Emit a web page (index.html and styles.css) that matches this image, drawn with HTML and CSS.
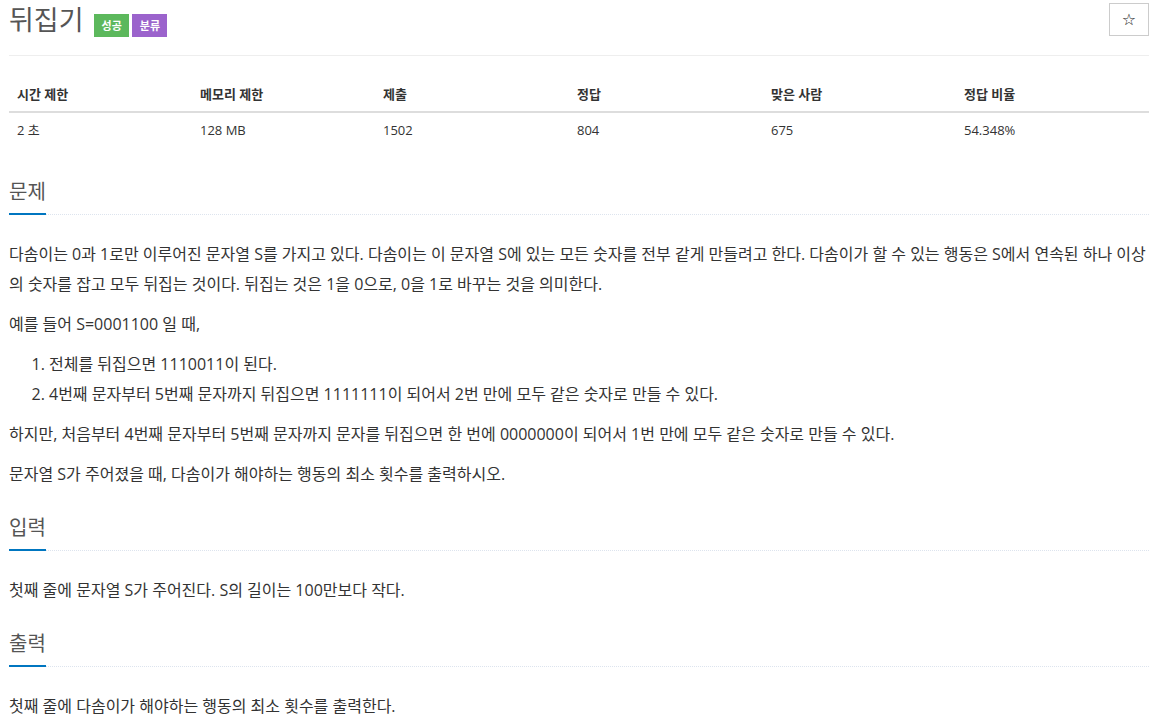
FILE: index.html
```html
<!DOCTYPE html>
<html lang="ko">
<head>
<meta charset="utf-8">
<link rel="stylesheet" href="styles.css">
</head>
<body>
<div class="page">
  <div class="page-header">
    <h1 class="title">뒤집기 <span class="label label-green">성공</span><span class="label label-purple">분류</span></h1>
    <button class="star">☆</button>
  </div>
  <table class="info">
    <colgroup>
      <col class="c1"><col class="c2"><col class="c3"><col class="c4"><col class="c5"><col class="c6">
    </colgroup>
    <thead>
      <tr><th>시간 제한</th><th>메모리 제한</th><th>제출</th><th>정답</th><th>맞은 사람</th><th>정답 비율</th></tr>
    </thead>
    <tbody>
      <tr><td>2 초</td><td>128 MB</td><td>1502</td><td>804</td><td>675</td><td>54.348%</td></tr>
    </tbody>
  </table>

  <section class="section">
    <div class="headline"><h2>문제</h2></div>
    <div class="text">
      <p>다솜이는 0과 1로만 이루어진 문자열 S를 가지고 있다. 다솜이는 이 문자열 S에 있는 모든 숫자를 전부 같게 만들려고 한다. 다솜이가 할 수 있는 행동은 S에서 연속된 하나 이상의 숫자를 잡고 모두 뒤집는 것이다. 뒤집는 것은 1을 0으로, 0을 1로 바꾸는 것을 의미한다.</p>
      <p>예를 들어 S=0001100 일 때,</p>
      <ol>
        <li>전체를 뒤집으면 1110011이 된다.</li>
        <li>4번째 문자부터 5번째 문자까지 뒤집으면 1111111이 되어서 2번 만에 모두 같은 숫자로 만들 수 있다.</li>
      </ol>
      <p>하지만, 처음부터 4번째 문자부터 5번째 문자까지 문자를 뒤집으면 한 번에 0000000이 되어서 1번 만에 모두 같은 숫자로 만들 수 있다.</p>
      <p>문자열 S가 주어졌을 때, 다솜이가 해야하는 행동의 최소 횟수를 출력하시오.</p>
    </div>
  </section>

  <section class="section">
    <div class="headline"><h2>입력</h2></div>
    <div class="text">
      <p>첫째 줄에 문자열 S가 주어진다. S의 길이는 100만보다 작다.</p>
    </div>
  </section>

  <section class="section">
    <div class="headline"><h2>출력</h2></div>
    <div class="text">
      <p>첫째 줄에 다솜이가 해야하는 행동의 최소 횟수를 출력한다.</p>
    </div>
  </section>
</div>
</body>
</html>
```
FILE: styles.css
```css
html, body {
  margin: 0;
  padding: 0;
  background: #fff;
}
body {
  font-family: "Open Sans", "Noto Sans CJK KR", sans-serif;
  color: #333;
  font-size: 13px;
}
.page {
  padding: 0 3px 0 9px;
}
.page-header {
  display: flex;
  justify-content: space-between;
  align-items: flex-start;
  border-bottom: 1px solid #eee;
  height: 56px;
  box-sizing: border-box;
}
.title {
  margin: 0;
  padding-top: 2px;
  font-size: 27px;
  font-weight: 400;
  line-height: 36px;
  color: #555;
  display: flex;
  align-items: center;
}
.label {
  display: inline-block;
  font-size: 11px;
  font-weight: 700;
  color: #fff;
  line-height: 23px;
  height: 23px;
  padding: 0 7px 0 8px;
  margin-top: 11px;
}
.label-green {
  background: #5cb85c;
  margin-left: 10px;
}
.label-purple {
  background: #9b63cc;
  margin-left: 3px;
}
.star {
  margin-top: 3px;
  width: 40px;
  height: 33px;
  border: 1px solid #ccc;
  background: #fff;
  font-size: 16px;
  color: #222;
  padding: 0;
  font-family: "DejaVu Sans", sans-serif;
}
.info {
  width: 1140px;
  border-collapse: collapse;
  margin-top: 21px;
  margin-bottom: 30px;
  table-layout: fixed;
}
.info .c1, .info .c2 { width: 183px; }
.info .c3, .info .c4 { width: 194px; }
.info .c5 { width: 193px; }
.info th, .info td {
  text-align: left;
  padding: 8px;
  font-size: 13px;
  line-height: 18px;
}
.info th {
  font-weight: 700;
  border-bottom: 2px solid #ddd;
  color: #333;
}
.info td {
  color: #333;
}
.section {
  margin-top: 24px;
}
.info + .section {
  margin-top: 0;
}
.headline {
  border-bottom: 1px dotted #dde4ee;
}
.headline h2 {
  display: inline-block;
  margin: 0 0 -1px 0;
  font-size: 20px;
  font-weight: 400;
  line-height: 30px;
  color: #555;
  padding-bottom: 6px;
  border-bottom: 2px solid #0076c0;
}
.text {
  padding-top: 24px;
  font-size: 16px;
  line-height: 30px;
}
.text p {
  margin: 0 0 10px;
}
.text ol {
  margin: 0 0 10px;
  padding-left: 40px;
}
```
